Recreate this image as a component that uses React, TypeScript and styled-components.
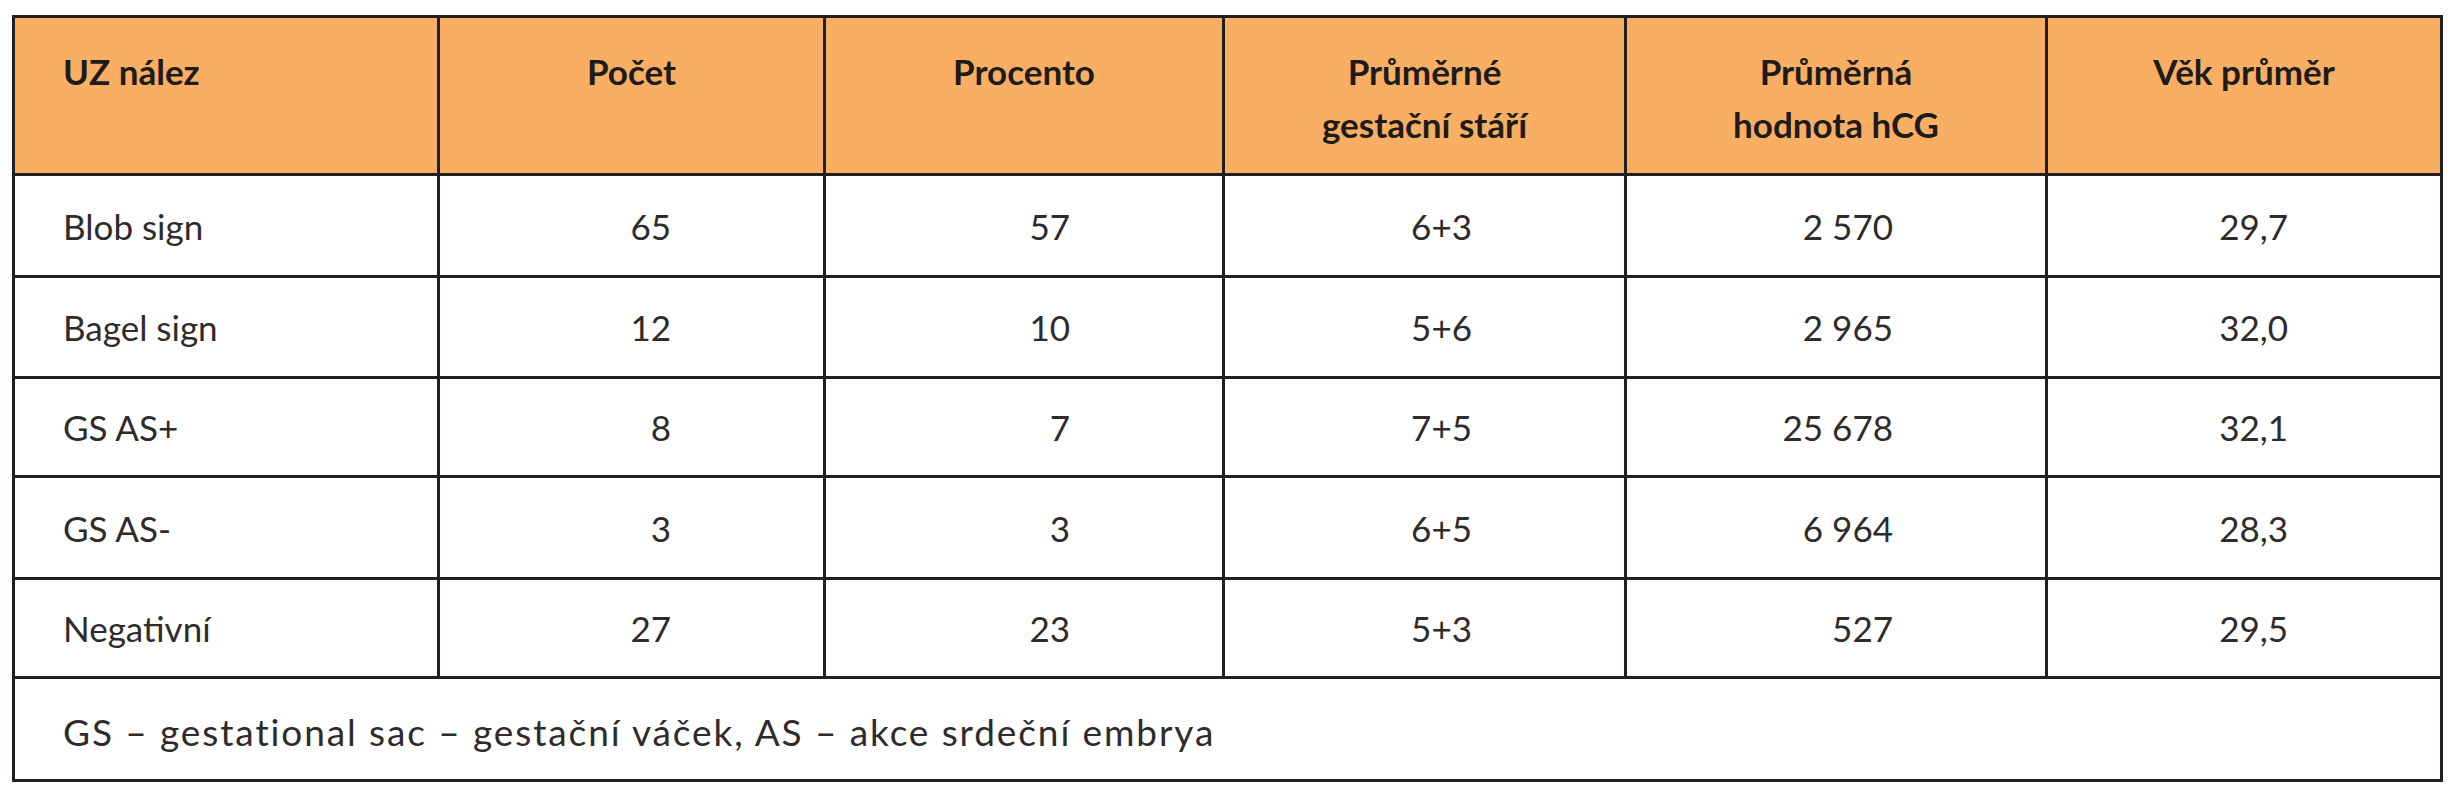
import React from "react";
import styled, { createGlobalStyle } from "styled-components";

const GlobalStyle = createGlobalStyle`
  html, body {
    margin: 0;
    padding: 0;
    background: #ffffff;
  }
  body {
    font-family: Lato, "Open Sans", "Liberation Sans", sans-serif;
    color: #231f20;
  }
`;

const Page = styled.div`
  padding: 15px 0 0 12px;
  width: 2455px;
  height: 800px;
  box-sizing: border-box;
`;

const Table = styled.table`
  border-collapse: collapse;
  width: 2428px;
  table-layout: fixed;
  font-family: Lato, "Open Sans", "Liberation Sans", sans-serif;
  font-size: 35px;
  border: 3px solid #231f20;
`;

const HeadRow = styled.tr`
  height: 158px;
  background: #f8ae63;
`;

const HeadCell = styled.th<{ $left?: boolean }>`
  border: 3px solid #231f20;
  vertical-align: top;
  text-align: ${(p) => (p.$left ? "left" : "center")};
  padding: 27px 10px 0 ${(p) => (p.$left ? "48px" : "10px")};
  font-weight: 700;
  line-height: 53px;
  color: #1e1b1b;
`;

const BodyRow = styled.tr<{ $h: number }>`
  height: ${(p) => p.$h}px;
`;

const Cell = styled.td<{ $num?: boolean }>`
  border: 3px solid #231f20;
  vertical-align: middle;
  text-align: ${(p) => (p.$num ? "right" : "left")};
  padding: 0 ${(p) => (p.$num ? "152px" : "10px")} 0 ${(p) => (p.$num ? "10px" : "48px")};
  font-weight: 400;
  color: #2e2b2c;
  white-space: nowrap;
`;

const FootCell = styled.td`
  border: 3px solid #231f20;
  vertical-align: middle;
  text-align: left;
  padding: 4px 10px 0 48px;
  font-size: 37px;
  font-weight: 400;
  color: #2e2b2c;
  letter-spacing: 1.9px;
  white-space: nowrap;
`;

const widths = [425, 386, 399, 402, 421, 395];

const headers: { lines: string[]; left?: boolean }[] = [
  { lines: ["UZ nález"], left: true },
  { lines: ["Počet"] },
  { lines: ["Procento"] },
  { lines: ["Průměrné", "gestační stáří"] },
  { lines: ["Průměrná", "hodnota hCG"] },
  { lines: ["Věk průměr"] },
];

const rows: { h: number; cells: string[] }[] = [
  { h: 102, cells: ["Blob sign", "65", "57", "6+3", "2 570", "29,7"] },
  { h: 101, cells: ["Bagel sign", "12", "10", "5+6", "2 965", "32,0"] },
  { h: 99, cells: ["GS AS+", "8", "7", "7+5", "25 678", "32,1"] },
  { h: 102, cells: ["GS AS-", "3", "3", "6+5", "6 964", "28,3"] },
  { h: 99, cells: ["Negativní", "27", "23", "5+3", "527", "29,5"] },
];

export default function App() {
  return (
    <>
      <GlobalStyle />
      <Page>
        <Table>
          <colgroup>
            {widths.map((w, i) => (
              <col key={i} style={{ width: w }} />
            ))}
          </colgroup>
          <thead>
            <HeadRow>
              {headers.map((h, i) => (
                <HeadCell key={i} $left={h.left}>
                  {h.lines.map((l, j) => (
                    <React.Fragment key={j}>
                      {j > 0 && <br />}
                      {l}
                    </React.Fragment>
                  ))}
                </HeadCell>
              ))}
            </HeadRow>
          </thead>
          <tbody>
            {rows.map((r, i) => (
              <BodyRow key={i} $h={r.h}>
                {r.cells.map((c, j) => (
                  <Cell key={j} $num={j > 0}>
                    {c}
                  </Cell>
                ))}
              </BodyRow>
            ))}
            <BodyRow $h={103}>
              <FootCell colSpan={6}>
                GS – gestational sac – gestační váček, AS – akce srdeční embrya
              </FootCell>
            </BodyRow>
          </tbody>
        </Table>
      </Page>
    </>
  );
}
